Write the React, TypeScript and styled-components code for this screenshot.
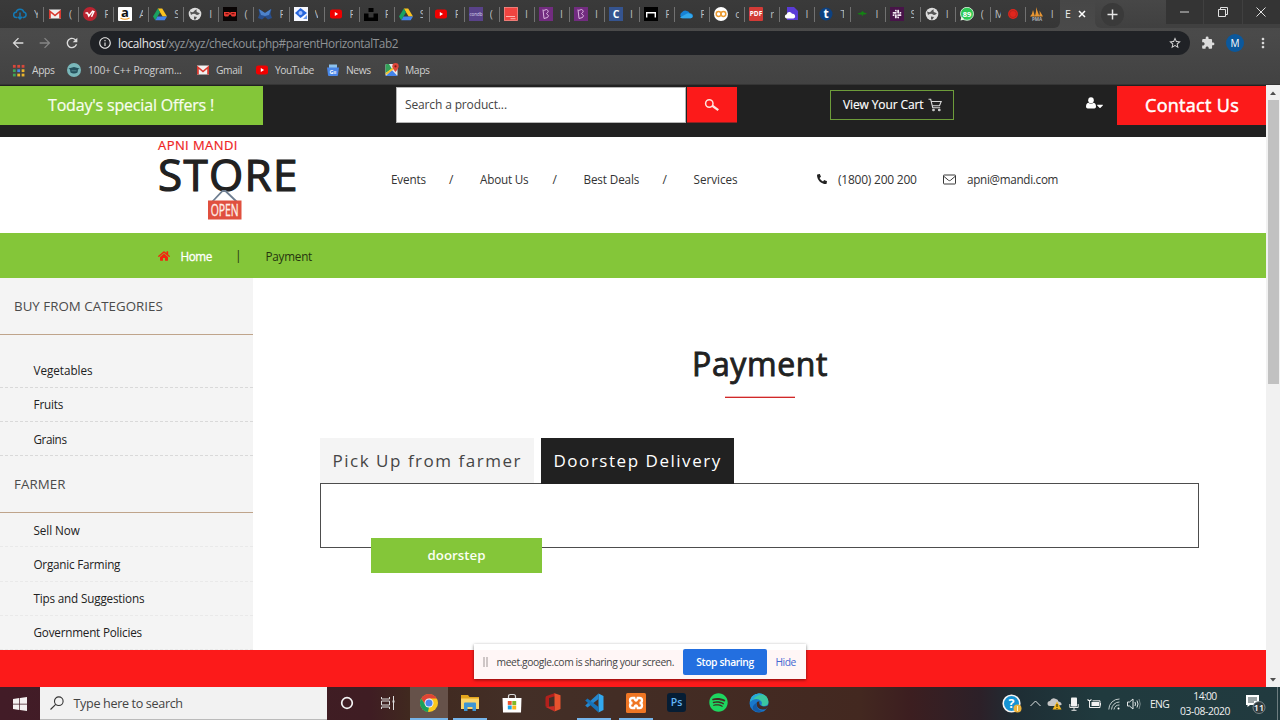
import React from 'react';
import styled, { createGlobalStyle } from 'styled-components';
import { FaHome, FaPhone, FaCaretDown, FaSlack, FaSpotify } from 'react-icons/fa';
import { MdArrowBack, MdArrowForward, MdRefresh, MdInfoOutline, MdStarBorder, MdExtension, MdMoreVert } from 'react-icons/md';

const GREEN = '#84c639';
const RED = '#fc1a1a';
const INK = '#212121';

const Global = createGlobalStyle`
  *, *::before, *::after { box-sizing: border-box; }
  body { margin: 0; overflow: hidden; background: #fff; font-family: "Open Sans", "Noto Sans", sans-serif; }
  svg { display: block; flex: none; }
`;

interface TypeProps { $size?: number; $ls?: number; $weight?: number; $stroke?: number }

const Text = styled.span<TypeProps>`
  flex: none;
  white-space: pre;
  font-size: ${p => p.$size ?? 12}px;
  letter-spacing: ${p => p.$ls ?? 0}px;
  font-weight: ${p => p.$weight ?? 400};
  -webkit-text-stroke: ${p => p.$stroke ?? 0}px currentColor;
`;

const Screen = styled.div`
  position: relative;
  display: flex;
  flex-direction: column;
  width: 1280px;
  height: 720px;
  overflow: hidden;
`;

/* ---------- browser chrome ---------- */

const Chrome = styled.header`
  height: 85px;
  flex: none;
  background: linear-gradient(#474747, #4a4a4a 40%, #424242);
  border-bottom: 1px solid #353535;
`;

const TabStrip = styled.div`
  display: flex;
  height: 28px;
`;

const Tabs = styled.div`
  display: flex;
  width: 1060px;
  padding-left: 8px;
  background: linear-gradient(#3a3a3a, #363636);
  border-radius: 0 0 6px 0;
`;

const Tab = styled.div`
  position: relative;
  display: flex;
  align-items: center;
  flex: none;
  width: 35.07px;
  padding-left: 5px;
  gap: 7px;
  &:not(:last-child)::after {
    content: '';
    position: absolute;
    right: -1px;
    top: 7px;
    width: 1px;
    height: 15px;
    background: #717171;
  }
`;

const TabLetter = styled.span<{ $wide?: boolean }>`
  width: ${p => (p.$wide ? 6 : 3.5)}px;
  overflow: hidden;
  font-size: 10.5px;
  line-height: 16px;
  color: #b9bcbf;
`;

const MeetTab = styled(Tab)`
  gap: 5px;
`;

const ActiveTab = styled.div`
  display: flex;
  align-items: center;
  gap: 7px;
  width: 35px;
  padding-left: 5px;
  color: #eee;
`;

const NewTabZone = styled.div`
  width: 71px;
  padding: 3px 0 0 6px;
  background: linear-gradient(#474747, #404040);
  border-radius: 0 0 0 6px;
`;

const NewTab = styled.div`
  display: grid;
  place-items: center;
  width: 23px;
  height: 23px;
  border-radius: 50%;
  background: #3a3a3a;
`;

const WindowButtons = styled.div`
  display: flex;
  gap: 1px;
  height: 28px;
  width: 114px;
  background: #404040;
  padding-bottom: 4px;
`;

const WindowButton = styled.div`
  flex: 1;
  display: grid;
  place-items: center;
  background: #343434;
`;

const Toolbar = styled.div`
  display: flex;
  align-items: center;
  height: 30px;
  padding-left: 10px;
  color: #dcdcdc;
`;

const NavButtons = styled.div`
  display: flex;
  gap: 11px;
  width: 80px;
`;

const Omnibox = styled.div`
  display: flex;
  align-items: center;
  width: 1100px;
  height: 24px;
  padding: 0 8px;
  border-radius: 12px;
  background: #202226;
  color: #8f9295;
`;

const Host = styled(Text)`
  margin-left: 6px;
  padding-bottom: 1px;
  color: #e8e8e8;
`;

const Path = styled(Text)`
  flex: 1;
  padding-bottom: 1px;
`;

const Extensions = styled.div`
  display: flex;
  align-items: center;
  margin-left: 11px;
  gap: 11px;
`;

const Avatar = styled.div`
  display: grid;
  place-items: center;
  width: 18px;
  height: 18px;
  border-radius: 50%;
  background: #0b589c;
  color: #fff;
`;

const Bookmarks = styled.div`
  display: flex;
  align-items: center;
  height: 24px;
  padding-left: 12px;
  color: #cfcfcf;
`;

const Bookmark = styled.div<{ $width: number; $gap?: number }>`
  display: flex;
  align-items: center;
  gap: ${p => p.$gap ?? 7}px;
  flex: none;
  width: ${p => p.$width}px;
`;

/* ---------- page ---------- */

const Viewport = styled.div`
  display: flex;
  height: 602px;
  flex: none;
`;

const Page = styled.div`
  display: flex;
  flex-direction: column;
  width: 1266px;
  background: #fff;
  color: ${INK};
`;

const TopBar = styled.div`
  display: flex;
  flex: none;
  height: 52px;
  padding-top: 1px;
  background: ${INK};
  color: #fff;
`;

const Offers = styled.div`
  display: flex;
  align-items: center;
  width: 263px;
  height: 39px;
  padding: 0 0 2px 48px;
  background: ${GREEN};
  color: #f8fdf0;
`;

const SearchForm = styled.div`
  display: flex;
  width: 341px;
  height: 36px;
  margin: 1px 0 0 133px;
`;

const SearchInput = styled.div`
  display: flex;
  align-items: center;
  width: 290px;
  padding: 0 8px 1px;
  background: #fff;
  border: 1px solid #b5b5b5;
  color: #444;
`;

const SearchButton = styled.div`
  display: grid;
  place-items: center;
  flex: 1;
  margin-left: 1px;
  background: ${RED};
  border-bottom: 1px solid #8f2222;
`;

const CartButton = styled.div`
  display: flex;
  align-items: center;
  gap: 5px;
  width: 124px;
  height: 30px;
  margin: 4px 0 0 93px;
  padding: 0 0 1px 12px;
  border: 1px solid #6d9c3a;
`;

const UserMenu = styled.div`
  display: flex;
  align-items: flex-end;
  height: 25px;
  width: 19px;
  margin: 0 12px 0 132px;
  padding-bottom: 2px;
`;

const MenuCaret = styled(FaCaretDown)`
  margin: 0 0 -2px -1px;
`;

const Contact = styled.div`
  display: flex;
  align-items: center;
  width: 149px;
  height: 39px;
  padding: 0 0 1px 28px;
  background: ${RED};
`;

const SiteHeader = styled.div`
  display: flex;
  flex: none;
  height: 96px;
  padding-left: 158px;
`;

const Logo = styled.div`
  width: 233px;
`;

const LogoSmall = styled(Text)`
  display: block;
  height: 17px;
  line-height: 17px;
  color: #ee2323;
`;

const LogoLarge = styled(Text)`
  display: block;
  height: 36px;
  line-height: 41px;
`;

const SignHolder = styled.div`
  margin-left: 49px;
`;

const Nav = styled.nav`
  display: flex;
  align-items: center;
  height: 84px;
  width: 426px;
  color: #333;
`;

const NavLink = styled.div<{ $width: number }>`
  display: flex;
  width: ${p => p.$width}px;
`;

const Slash = styled(Text)`
  width: 5px;
  margin: 0 26px 0 23px;
`;

const ContactLine = styled.div<{ $width: number }>`
  display: flex;
  align-items: center;
  gap: 11px;
  height: 84px;
  width: ${p => p.$width}px;
  color: #333;
`;

const PhoneIcon = styled(FaPhone)`
  color: #222;
  transform: scaleX(-1);
`;

const Breadcrumb = styled.div`
  display: flex;
  align-items: center;
  flex: none;
  height: 45px;
  padding-left: 158px;
  background: ${GREEN};
  color: #26350f;
`;

const HomeLink = styled.div`
  display: flex;
  align-items: center;
  gap: 10.500px;
  width: 77px;
  color: #fff;
`;

const Divider = styled(Text)`
  width: 30.5px;
  padding-bottom: 1px;
`;

const Body = styled.div`
  display: flex;
  flex: none;
  height: 372px;
`;

const Sidebar = styled.aside`
  width: 253px;
  background: #f4f4f4;
`;

const SideTitle = styled.div`
  display: flex;
  align-items: center;
  height: 57px;
  padding: 0 0 1px 14px;
  border-bottom: 1px solid #bfa48b;
  color: #4b4b4b;
`;

const SideList = styled.div<{ $top?: number; $line: string }>`
  padding-top: ${p => p.$top ?? 0}px;
  & > div { border-bottom: 1px dashed ${p => p.$line}; }
`;

const SideItem = styled.div`
  display: flex;
  align-items: center;
  height: 34.2px;
  padding-left: 33.5px;
`;

const Main = styled.main`
  width: 1013px;
  padding: 60px 67px 0;
`;

const Title = styled.div`
  display: flex;
  align-items: center;
  justify-content: center;
  height: 52px;
  padding: 0 0 2px 1px;
`;

const TitleRule = styled.div`
  width: 70px;
  height: 2px;
  margin: 6px auto 40px;
  background: linear-gradient(#f4b5b5 45%, #cf2929 46%);
`;

const TabList = styled.div`
  display: flex;
  gap: 7px;
`;

const TabButton = styled.div<{ $active?: boolean; $width: number }>`
  display: flex;
  align-items: center;
  position: relative;
  width: ${p => p.$width}px;
  height: ${p => (p.$active ? 46 : 45)}px;
  margin-bottom: ${p => (p.$active ? -1 : 0)}px;
  padding: 0 0 ${p => (p.$active ? 2 : 0)}px 12.5px;
  background: ${p => (p.$active ? INK : '#f4f4f4')};
  color: ${p => (p.$active ? '#fff' : '#454545')};
`;

const TabPanel = styled.div`
  height: 65px;
  padding: 54px 0 0 50px;
  border: 1px solid #4d4d4d;
`;

const DoorstepButton = styled.div`
  display: grid;
  place-items: center;
  width: 171px;
  height: 35px;
  padding-bottom: 1px;
  background: ${GREEN};
  color: #fbfff3;
`;

const FooterBand = styled.div`
  flex: 1;
  background: ${RED};
`;

const Scrollbar = styled.div`
  display: flex;
  flex-direction: column;
  align-items: center;
  width: 14px;
  padding-top: 1px;
  background: #f1f1f1;
`;

const ScrollArrow = styled.div`
  display: grid;
  place-items: center;
  height: 14px;
`;

const ScrollThumb = styled.div`
  width: 11px;
  height: 284px;
  margin-bottom: auto;
  background: #c1c1c1;
`;

/* ---------- sharing bar ---------- */

const ShareBar = styled.div`
  position: absolute;
  left: 474px;
  top: 644px;
  display: flex;
  align-items: center;
  width: 332px;
  height: 35px;
  padding-left: 9px;
  background: rgba(255, 255, 255, 0.96);
  box-shadow: 0 1px 3px rgba(0, 0, 0, 0.5);
  color: #454545;
`;

const Grip = styled.div`
  width: 5px;
  height: 10px;
  margin-right: 8.5px;
  border: solid #cfc6c6;
  border-width: 0 2px;
`;

const StopButton = styled.div`
  display: grid;
  place-items: center;
  width: 84px;
  height: 26px;
  margin: 0 8.5px 0 auto;
  border-radius: 2px;
  background: #236fe0;
  color: #fff;
`;

const HideLink = styled.div`
  display: flex;
  width: 30.5px;
  color: #4468d2;
`;

/* ---------- taskbar ---------- */

const Taskbar = styled.footer`
  display: flex;
  flex: none;
  height: 33px;
  background: linear-gradient(90deg, #421c27 0, #3f1d23 370px, #40291f 410px, #432f27 520px, #432820 860px, #3c1e20 910px, #2c2028 980px, #1e2e35 1020px, #203a3e 1100px, #213a3f 100%);
  color: #f0f0f0;
`;

const StartButton = styled.div`
  display: grid;
  place-items: center;
  width: 40px;
`;

const TaskSearch = styled.div`
  display: flex;
  align-items: center;
  gap: 9.5px;
  width: 287px;
  height: 33px;
  padding-left: 10px;
  background: #f2f2f2;
  border-bottom: 1px solid #bbb;
  color: #444;
`;

const Apps = styled.div`
  display: flex;
  margin-left: -1px;
`;

const TaskItem = styled.div<{ $focus?: boolean; $open?: boolean }>`
  display: grid;
  place-items: center;
  width: ${p => (p.$focus ? 38 : 34)}px;
  margin: 0 ${p => (p.$focus ? 1.65 : 3.65)}px;
  flex: none;
  background: ${p => (p.$focus ? '#66524a' : 'transparent')};
  border-bottom: 2px solid ${p => (p.$open ? '#76b5ea' : 'transparent')};
`;

const Tray = styled.div`
  display: flex;
  align-items: center;
  margin-left: auto;
  width: 279px;
`;

const TrayCell = styled.div<{ $width: number }>`
  display: flex;
  justify-content: center;
  flex: none;
  width: ${p => p.$width}px;
`;

const Clock = styled.div`
  display: flex;
  flex-direction: column;
  align-items: center;
  width: 60px;
  line-height: 15px;
`;

const ShowDesktop = styled.div`
  width: 1px;
  height: 33px;
  margin-left: 2px;
  background: #6d7d80;
`;

/* ---------- icon drawings ---------- */

const glyphText = (t: string, color: string, size: number, y = 10.5) => (
  <text x="7" y={y} fontSize={size} fontWeight="700" textAnchor="middle" fill={color} fontFamily="Open Sans, sans-serif">{t}</text>
);

const Ico = ({ children, s = 14 }: { children: React.ReactNode; s?: number }) => (
  <svg width={s} height={s} viewBox="0 0 14 14">{children}</svg>
);

const CloudDown = () => <Ico><path d="M4.2 10.5H3.4a2.6 2.6 0 0 1-.3-5.2A4 4 0 0 1 10.8 5a2.8 2.8 0 0 1 0 5.5H9.8M7 5.5v6.3M4.8 9.8 7 12l2.2-2.2" fill="none" stroke="#1479b4" strokeWidth="1.5" /></Ico>;
const Gmail = () => <Ico><path d="M1 2.5h12v9H1z" fill="#f1f1f1" /><path d="M1 11.5v-9l6 5 6-5v9h-1.8V6L7 9.4 2.8 6v5.5z" fill="#d93a30" /></Ico>;
const RedV = () => <Ico><circle cx="7" cy="7" r="7" fill="#bb2431" /><path d="M2.5 6h2l1.3 3L10 3.6M8.5 9.8 11.2 4" fill="none" stroke="#fff" strokeWidth="1.5" /></Ico>;
const Amazon = () => <Ico><rect width="14" height="14" rx="1" fill="#fff" />{glyphText('a', '#111', 13, 9.8)}<path d="M2.5 11q4.5 2.5 9 0" fill="none" stroke="#f39b1d" strokeWidth="1.2" /></Ico>;
const Drive = () => <Ico><path d="M4.8 1.5h4.4L14 9.6H9.6z" fill="#fbc31f" /><path d="M4.8 1.5 7 5.3 2.3 13.2 0 9.6z" fill="#19a261" /><path d="M4.500 9.600H14l-2.300 3.600H2.300z" fill="#4384ee" /></Ico>;
const Globe = () => <Ico><circle cx="7" cy="7" r="6.3" fill="#dcdcdc" /><path d="M2 4.500Q5 6 6 4.200T9 2.500Q7.500 4.500 10 5.500T12 6Q10 9 8 7.500T3 8zM6 9.500l3 .5-1.500 2.500H6z" fill="#555" /></Ico>;
const Glasses = () => <Ico><rect width="14" height="14" fill="#090404" /><path d="M1 5h5.600v1h.8V5H13v3.500l-1 1H8.800L7.500 7.500h-1L5.200 9.500H2l-1-1z" fill="#e93b32" /><path d="M2.500 6.300h3v1h-3zM8.500 6.300h3v1h-3z" fill="#500" /></Ico>;
const BlueM = () => <Ico><path d="M.5 2 7 6l6.500-4-1 5 1.500 4-4 1.500L7 10l-3 2.500L0 11l1.500-4z" fill="#294f8d" /><path d="m1 2 6 4 6-4-2 6-4 1-4-1z" fill="#4d82ca" /></Ico>;
const Diamond = () => <Ico><rect width="14" height="14" fill="#f6f8ff" /><path d="m6.500 1 6.500 5-6.500 5L1 6z" fill="#2766dc" /><circle cx="6.500" cy="6" r="2" fill="#9cbdff" /><path d="m9 12 4-4v4z" fill="#6a99ee" /></Ico>;
const YouTube = () => <Ico><rect x="1" y="2.500" width="12" height="9" rx="2.300" fill="#f00000" /><path d="M5.800 5v4l3.300-2z" fill="#fff" /></Ico>;
const Unsplash = () => <Ico><path d="M4.500 1h5v4h-5zM0 6.500h4.500v4h5v-4H14V14H0z" fill="#000" /></Ico>;
const Condb = () => <Ico><rect width="14" height="14" fill="#594289" /><text x="7" y="8.500" fontSize="4.500" textAnchor="middle" fill="#dcd5ec" fontFamily="Open Sans">condb</text></Ico>;
const RedBox = () => <Ico><rect x=".4" y=".4" width="13.200" height="13.200" fill="#f14440" stroke="#ff8c88" strokeWidth=".8" /><path d="M2 9.500h9M6.500 11.700h5" stroke="#ffc0bb" strokeWidth=".9" /></Ico>;
const Bee = () => <Ico><rect width="14" height="14" fill="#722c80" /><path d="M4 2.500 5 11.500 8.500 10.500Q11 9 7.500 6.500 11 4 7.500 2.500L4.500 3.500" fill="none" stroke="#e6c3ea" strokeWidth=".9" /></Ico>;
const SquareC = () => <Ico><rect width="14" height="14" fill="#35548f" />{glyphText('C', '#fff', 10.5)}</Ico>;
const Arch = () => <Ico><rect width="14" height="14" fill="#000" /><path d="M2.700 10.500V5.800h8.600v4.700" fill="none" stroke="#fff" strokeWidth="1.400" /></Ico>;
const OneDrive = () => <Ico><path d="M3.500 11.300a3.300 3.300 0 0 1-.5-6Q5 2.500 8 4q2 .3 2.800 2.300 3.200.2 3 2.700t-2.300 2.300z" fill="#1681d5" /><path d="M1 10.500 8 6.500q4-1 5.800 2.500-.3 2.300-2.300 2.300h-8Q2 11.500 1 10.500" fill="#32a7ec" /></Ico>;
const Colab = () => <Ico><circle cx="7" cy="7" r="7" fill="#fff" /><circle cx="4.600" cy="7" r="2.400" fill="none" stroke="#eb9b32" strokeWidth="1.500" /><circle cx="9.400" cy="7" r="2.400" fill="none" stroke="#eb9b32" strokeWidth="1.500" /></Ico>;
const Pdf = () => <Ico><rect width="14" height="14" rx="1" fill="#d23b37" />{glyphText('PDF', '#fff', 6.5, 9.4)}</Ico>;
const PurpleCloud = () => <Ico><path d="M3 0h7l4 4v9H3z" fill="#5a3bd6" /><path d="M2.500 11.500a2.200 2.200 0 0 1 .2-4.300 2.800 2.800 0 0 1 5.300-.4 2.300 2.300 0 0 1 1.300 4.700z" fill="#fff" /></Ico>;
const RoundT = () => <Ico><circle cx="7" cy="7" r="6.500" fill="#0d4180" />{glyphText('t', '#fff', 12, 11)}</Ico>;
const Plane = () => <Ico><path d="M2.500 6.500 6 5.500 7.500 4l1.500 1.500 3 1L10 7.500H8l-.5 2-1-2H4z" fill="#138313" /></Ico>;
const Slack = () => <Ico><rect width="14" height="14" fill="#481449" /><FaSlack x="2" y="2" size={10} color="#f3e8f3" /></Ico>;
const WhatsBadge = () => <Ico><circle cx="7" cy="6.800" r="6.500" fill="#2dc955" stroke="#e8fbe9" strokeWidth=".8" /><path d="m.5 13.500 1-4 3 3z" fill="#e8fbe9" />{glyphText('89', '#fff', 7.5, 9.6)}</Ico>;
const RecDot = () => <Ico><circle cx="7" cy="7" r="4.900" fill="#e0261d" /><circle cx="7" cy="7" r="3.500" fill="none" stroke="#91201b" strokeWidth=".5" /></Ico>;
const Sails = () => <Ico><path d="M0 9.500Q2.500 7 3 3l2 6.500zM4.500 9.500Q6.500 6 6 0l3.500 9.500zM9 9.500q1.200-2 .5-6l3.500 6z" fill="#e79532" /><text x="7" y="13.800" fontSize="4.500" fontWeight="700" textAnchor="middle" fill="#aeb2bb" fontFamily="Open Sans">PMA</text></Ico>;

const AppsGrid = () => (
  <Ico s={13}>{['#d9483b', '#d9483b', '#d9483b', '#3fa557', '#4a87e8', '#e8b52d', '#3fa557', '#e8b52d', '#e8b52d'].map((c, i) => (
    <rect key={i} x={1 + (i % 3) * 4.700} y={1 + Math.floor(i / 3) * 4.700} width="3" height="3" fill={c} />
  ))}</Ico>
);
const Owl = () => <Ico><circle cx="7" cy="7" r="7" fill="#79b7ba" /><path d="m1.500 5.500 5.500-1.500 5.500 1.500-1.500 1-.5 3q-3.500 2-7 0l-.5-3z" fill="#24505c" /><path d="M4.500 7.800h5" stroke="#5f9599" strokeWidth=".8" /></Ico>;
const News = () => <Ico><path d="M3 1.500h8V7H3z" fill="#8cc2ee" /><path d="M1 4.500h12l-1 7.500q0 1-1 1H3q-1 0-1-1z" fill="#4a86e8" />{glyphText('G≡', '#fff', 5.5, 10.8)}</Ico>;
const Maps = () => <Ico><rect x=".5" y="1" width="12" height="12" rx="1" fill="#e7eaec" /><path d="M.5 2v8L7 6 4 1H1.500z" fill="#34a25a" /><path d="m.8 13 6-6 5.700 6z" fill="#4383ea" /><path d="m1 11 9-7" stroke="#f6c42b" strokeWidth="1.800" /><path d="M10.500 9Q7.300 5 7.300 3.200a3.200 3.200 0 0 1 6.400 0Q13.700 5 10.500 9" fill="#e0473a" /><circle cx="10.500" cy="3.300" r="1.100" fill="#7d1c16" /></Ico>;

const tabs: [() => React.ReactElement, string][] = [
  [CloudDown, 'Y'], [Gmail, '('], [RedV, 'F'], [Amazon, 'A'], [Drive, 'S'], [Globe, 'I'], [Glasses, '('], [BlueM, 'F'],
  [Diamond, 'V'], [YouTube, 'F'], [Unsplash, 'F'], [Drive, 'S'], [YouTube, 'F'], [Condb, '('], [RedBox, 'I'], [Bee, 'I'],
  [Bee, 'I'], [SquareC, 'I'], [Arch, 'F'], [OneDrive, 'F'], [Colab, 'c'], [Pdf, 'r'], [PurpleCloud, 'I'], [RoundT, 'T'],
  [Plane, 'I'], [Slack, 'S'], [Globe, 'I'], [WhatsBadge, '('],
];

const OpenSign = () => (
  <svg width="36" height="31" viewBox="0 0 36 31">
    <path d="M5 12 15.500 1h3L30 12" fill="none" stroke="#6e7e91" strokeWidth="1.800" />
    <rect x="1" y="10.500" width="33.500" height="19" fill="#e0503f" />
    <text x="17.700" y="25.600" textAnchor="middle" textLength="28" lengthAdjust="spacingAndGlyphs" fontSize="17" fill="#fff0ea" stroke="#fff0ea" strokeWidth=".3" fontFamily="Open Sans, sans-serif">OPEN</text>
  </svg>
);

const CartIcon = () => (
  <svg width="14" height="14" viewBox="0 0 14 14" fill="none" stroke="#d8d8d8" strokeWidth="1.100">
    <path d="M.5 1.300h2.200l2 8.400h7.500M3.500 3.500h9.700l-1.700 4.200H4.400" />
    <circle cx="5.500" cy="12" r=".8" /><circle cx="11.300" cy="12" r=".8" />
  </svg>
);

const MagnifierIcon = () => (
  <svg width="16" height="14" viewBox="0 0 16 14" fill="none" stroke="#ffe3dd">
    <circle cx="5.300" cy="5.500" r="3.700" strokeWidth="1.500" /><path d="m8.300 7.800 6 4.300" strokeWidth="2.300" />
  </svg>
);

const UserIcon = () => (
  <svg width="10" height="12" viewBox="0 0 10 12" fill="#fff">
    <ellipse cx="5" cy="3.300" rx="2.800" ry="3.100" /><path d="M2.300 5.800Q0 6.300 0 9.800 0 11.500 1.700 11.500h6.600Q10 11.500 10 9.800 10 6.300 7.700 5.800 5 8 2.300 5.800" />
  </svg>
);

const EnvelopeIcon = () => (
  <svg width="13" height="11" viewBox="0 0 13 11" fill="none" stroke="#3a3a3a">
    <rect x=".5" y="1" width="12" height="9" rx=".6" /><path d="M.8 2.300 5.500 6.300q1 .7 2 0L12.200 2.300" />
  </svg>
);

const Windows = () => <svg width="14" height="14" viewBox="0 0 14 14" fill="#f4f0f0"><path d="m0 2 6.300-.9v5.600H0zM7 1l7-1v6.700H7zM0 7.400h6.300V13L0 12.100zM7 7.400h7V14l-7-1z" /></svg>;
const TaskMagnifier = () => <svg width="14" height="14" viewBox="0 0 14 14" fill="none" stroke="#333" strokeWidth="1.100"><circle cx="8.800" cy="5.200" r="4.300" /><path d="M5.700 8.300.5 13.500" /></svg>;
const Cortana = () => <svg width="14" height="14" viewBox="0 0 14 14"><circle cx="7" cy="7" r="5.300" fill="none" stroke="#f5f5f5" strokeWidth="1.700" /></svg>;
const TaskView = () => <svg width="14" height="14" viewBox="0 0 14 14" fill="none" stroke="#ddd" strokeWidth="1"><path d="M.5 1v2h8V1M.5 13v-2h8v2M.5 5h8v4h-8zM12.500 0v14" /><path d="M11.500 5.500h2" strokeWidth="2" /></svg>;
const ChromeIcon = () => (
  <svg width="20" height="20" viewBox="0 0 20 20">
    <circle cx="10" cy="10" r="9" fill="#fbc81e" />
    <path d="M2.200 5.500A9 9 0 0 1 17.800 5.500H10L6.500 12z" fill="#df4436" />
    <path d="M2.200 5.500 6.500 12 10 14 9 19A9 9 0 0 1 2.200 5.500" fill="#1ba05c" />
    <circle cx="10" cy="10" r="4.500" fill="#f5f5f5" /><circle cx="10" cy="10" r="3.500" fill="#4a86ec" />
  </svg>
);
const Folder = () => <svg width="20" height="18" viewBox="0 0 20 18"><path d="M1 1h7l1.500 2H19v12H1z" fill="#e5a61c" /><path d="M1 4.500h18V15H1z" fill="#fbd568" /><path d="M4 17V9.500q0-1 1-1h10q1 0 1 1V17h-3.500v-4h-5v4z" fill="#3e96d2" /></svg>;
const Store = () => <svg width="20" height="20" viewBox="0 0 20 20"><path d="M6.500 6V3.500q0-2 2-2h3q2 0 2 2V6" fill="none" stroke="#d9d9d9" strokeWidth="1.200" /><path d="M.5 5h19l-.5 14.500H1z" fill="#fff" /><path d="M5.800 8h3.900v3.900H5.800z" fill="#ed5530" /><path d="M10.300 8h3.900v3.900h-3.900z" fill="#80b827" /><path d="M5.800 12.500h3.900v3.900H5.800z" fill="#1ba2e6" /><path d="M10.300 12.500h3.900v3.900h-3.900z" fill="#f9b71c" /></svg>;
const Office = () => <svg width="16" height="19" viewBox="0 0 16 19"><path d="M10 0 1.500 3Q.5 3.500.5 5v8.500l3.500 1V5l6-1.700z" fill="#b3201c" /><path d="m9.500.2 6 2V16l-6 2.500z" fill="#e8532e" /><path d="m.7 14 9-1v5.500z" fill="#c72c25" /></svg>;
const VsCode = () => <svg width="20" height="20" viewBox="0 0 20 20"><path d="M14.500.5 19.500 3v14l-5 2.500z" fill="#32a8ee" /><path d="M14.500.5V6L3.500 14.500l-2.300-2z" fill="#2587cf" /><path d="M14.500 19.500V14L3.500 5.500l-2.300 2z" fill="#1673b9" /></svg>;
const Xampp = () => <svg width="20" height="20" viewBox="0 0 20 20"><rect width="20" height="20" rx="1.500" fill="#ef7624" /><path d="M6.500 5h1.800Q9 7.500 10 7.500T11.700 5h1.800a2.500 2.500 0 0 1 0 5 2.500 2.500 0 0 1 0 5h-1.800Q11 12.500 10 12.500T8.300 15H6.500a2.500 2.500 0 0 1 0-5 2.500 2.500 0 0 1 0-5z" fill="none" stroke="#fff" strokeWidth="2.300" /></svg>;
const Photoshop = () => <svg width="19" height="19" viewBox="0 0 19 19"><rect width="19" height="19" rx="3" fill="#061d34" /><text x="9.500" y="13" fontSize="10.500" fontWeight="600" textAnchor="middle" fill="#62b4f4" fontFamily="Open Sans, sans-serif">Ps</text></svg>;
const Edge = () => (
  <svg width="20" height="20" viewBox="0 0 20 20">
    <circle cx="10" cy="10" r="9.500" fill="#1978cb" />
    <path d="M.8 9Q2 1 10 .5q8.500.3 9.500 8 0 4-4 4.500-3.500.2-3-1.700 1-1.500-.5-3.300Q9 5 4.500 6.500 1.500 7.800.8 9" fill="#3bc6a0" />
    <path d="M.8 9Q2 1 10 .5q3 0 5 1.500Q8 1 4.500 6.500 1.500 7.800.8 9" fill="#28a7dc" />
    <path d="M7.500 10q0 6 6 6.500 3 .3 5-1.800 1-1 .8-2.500-4 2.300-7.300.5-2.500-1.700-1.500-4.500-2.500 0-3 1.800" fill="#432b26" />
    <path d="M7.500 10Q7 17 14 18 8.500 20.500 4.500 17 2 13 7.500 10" fill="#145aa5" />
  </svg>
);

const HelpBadge = () => <svg width="20" height="20" viewBox="0 0 20 20"><circle cx="9.500" cy="9.500" r="8.300" fill="#1593d4" stroke="#f4f4f4" strokeWidth="1.600" /><text x="9.500" y="14" fontSize="12.500" fontWeight="700" textAnchor="middle" fill="#fff" fontFamily="Open Sans, sans-serif">?</text><circle cx="15.500" cy="14.500" r="4" fill="#eeb33c" /><path d="M15.500 12v5" stroke="#fff3c5" strokeWidth="1" /></svg>;
const CloudWarn = () => <svg width="16" height="14" viewBox="0 0 16 14"><path d="M3 9a2.500 2.500 0 0 1 0-5Q5 0 9 2q2 .3 2.500 2.500Q15 5 14.500 8L9 9z" fill="#c6c6c6" /><path d="m10 4.500 4.500 8h-9z" fill="#f1b51e" /><path d="M10 7v3M10 11v1" stroke="#352a00" strokeWidth="1.100" /></svg>;
const Mic = () => <svg width="10" height="14" viewBox="0 0 10 14"><rect x="2" y=".5" width="6" height="9" rx=".8" fill="#f2f2f2" /><path d="M.8 7v3.500h8.400V7M5 10.500v2.800M2.500 13.300h5" fill="none" stroke="#e2e2e2" strokeWidth="1" /></svg>;
const Battery = () => <svg width="14" height="9" viewBox="0 0 14 9"><path d="M4.500 3h7.500v4H4.500z" fill="#f2f2f2" /><path d="M1 0v1.500h3V0M2.500 2v6.500H13V1.800H5.500M13.500 4v2.500" fill="none" stroke="#ececec" /></svg>;
const Wifi = () => <svg width="12" height="12" viewBox="0 0 12 12" fill="none" stroke="#c2cccc"><path d="M.8 11.500A10.500 10.500 0 0 1 11.500 1M3.500 11.500a8 8 0 0 1 8-7.500M6 11.500A5.500 5.500 0 0 1 11.500 7" /><circle cx="10.500" cy="10.500" r="1" fill="#fff" stroke="none" /></svg>;
const Volume = () => <svg width="14" height="12" viewBox="0 0 14 12" fill="none" stroke="#e3e8e8"><path d="M.5 4h2L6 1v10L2.500 8h-2z" /><path d="M8 4q1 2 0 4M10 2.500q2 3.500 0 7" /><path d="M12 1q2.500 5 0 10" stroke="#77898b" /></svg>;
const Notifications = () => <svg width="21" height="20" viewBox="0 0 21 20"><path d="M1 1h13v10H5l-2.500 2v-2H1z" fill="#fff" /><path d="M3 4h9M3 6h9M3 8h6" stroke="#39494c" /><circle cx="14" cy="13.500" r="6" fill="#303a3d" stroke="#8d989a" strokeWidth=".8" /><text x="14" y="17" fontSize="9" fontWeight="600" textAnchor="middle" fill="#fff" fontFamily="Open Sans, sans-serif">11</text></svg>;

const navLinks = [
  { label: 'Events', width: 35, ls: -0.15 }, { label: 'About Us', width: 49.5, ls: -0.2 },
  { label: 'Best Deals', width: 56, ls: -0.12 }, { label: 'Services', width: 45, ls: -0.03 },
];

const categories = [['Vegetables', -0.02], ['Fruits', -0.15], ['Grains', -0.4]] as const;
const farmer = [['Sell Now', -0.07], ['Organic Farming', -0.22], ['Tips and Suggestions', -0.17], ['Government Policies', -0.2]] as const;

const apps: { icon: React.ReactElement; open?: boolean; focus?: boolean }[] = [
  { icon: <Cortana /> }, { icon: <TaskView /> }, { icon: <ChromeIcon />, open: true, focus: true }, { icon: <Folder />, open: true },
  { icon: <Store /> }, { icon: <Office /> }, { icon: <VsCode />, open: true }, { icon: <Xampp />, open: true },
  { icon: <Photoshop /> }, { icon: <FaSpotify size={19} color="#1ed760" /> }, { icon: <Edge /> },
];

export default function App() {
  return (
    <Screen>
      <Global />
      <Chrome>
        <TabStrip>
          <Tabs>
            {tabs.map(([Icon, letter], i) => (
              <Tab key={i}><Icon /><TabLetter>{letter}</TabLetter></Tab>
            ))}
            <MeetTab><TabLetter $wide>M</TabLetter><RecDot /></MeetTab>
            <Tab><Sails /><TabLetter>I</TabLetter></Tab>
          </Tabs>
          <ActiveTab>
            <Text $size={10.5}>E</Text>
            <svg width="8" height="8" viewBox="0 0 8 8"><path d="m1 1 6 6M7 1 1 7" stroke="#fff" strokeWidth="1.500" /></svg>
          </ActiveTab>
          <NewTabZone><NewTab><svg width="11" height="11" viewBox="0 0 11 11"><path d="M5.500.5v10M.5 5.500h10" stroke="#e6e6e6" strokeWidth="1.500" /></svg></NewTab></NewTabZone>
          <WindowButtons>
            <WindowButton><svg width="9" height="9"><path d="M0 4h9" stroke="#d5d5d5" /></svg></WindowButton>
            <WindowButton><svg width="10" height="10" fill="none" stroke="#e0e0e0"><path d="M.5 2.500h7v7h-7zM2.500 2.500v-2h7v7h-2" /></svg></WindowButton>
            <WindowButton><svg width="10" height="10"><path d="m.5.500 9 9M9.500.5l-9 9" stroke="#e0e0e0" /></svg></WindowButton>
          </WindowButtons>
        </TabStrip>
        <Toolbar>
          <NavButtons><MdArrowBack size={16} /><MdArrowForward size={16} color="#858585" /><MdRefresh size={16} /></NavButtons>
          <Omnibox>
            <MdInfoOutline size={14} color="#e5e5e5" />
            <Host $size={11.8} $ls={-0.3}>localhost</Host>
            <Path $size={11.8} $ls={-0.43}>/xyz/xyz/checkout.php#parentHorizontalTab2</Path>
            <MdStarBorder size={14} color="#d8d8d8" />
          </Omnibox>
          <Extensions>
            <MdExtension size={14} />
            <Avatar><Text $size={10}>M</Text></Avatar>
            <MdMoreVert size={16} />
          </Extensions>
        </Toolbar>
        <Bookmarks>
          <Bookmark $width={55}><AppsGrid /><Text $size={10.3} $ls={-0.35}>Apps</Text></Bookmark>
          <Bookmark $width={129}><Owl /><Text $size={10.3} $ls={-0.18}>100+ C++ Program...</Text></Bookmark>
          <Bookmark $width={59} $gap={6}><Gmail /><Text $size={10.3} $ls={-0.4}>Gmail</Text></Bookmark>
          <Bookmark $width={71} $gap={6}><YouTube /><Text $size={10.3} $ls={-0.5}>YouTube</Text></Bookmark>
          <Bookmark $width={59} $gap={6}><News /><Text $size={10.3} $ls={-0.4}>News</Text></Bookmark>
          <Bookmark $width={60} $gap={6}><Maps /><Text $size={10.3} $ls={-0.4}>Maps</Text></Bookmark>
        </Bookmarks>
      </Chrome>

      <Viewport>
        <Page>
          <TopBar>
            <Offers><Text $size={16} $ls={-0.18} $stroke={0.2}>Today's special Offers !</Text></Offers>
            <SearchForm>
              <SearchInput><Text $size={12} $ls={-0.14}>Search a product...</Text></SearchInput>
              <SearchButton><MagnifierIcon /></SearchButton>
            </SearchForm>
            <CartButton><Text $size={12} $ls={-0.12} $stroke={0.15}>View Your Cart</Text><CartIcon /></CartButton>
            <UserMenu><UserIcon /><MenuCaret size={10} /></UserMenu>
            <Contact><Text $size={18} $ls={0.3} $stroke={0.5}>Contact Us</Text></Contact>
          </TopBar>

          <SiteHeader>
            <Logo>
              <LogoSmall $size={13} $ls={0.42} $stroke={0.2}>APNI MANDI</LogoSmall>
              <LogoLarge $size={44} $ls={1.3} $stroke={1.2}>STORE</LogoLarge>
              <SignHolder><OpenSign /></SignHolder>
            </Logo>
            <Nav>
              {navLinks.map((l, i) => (
                <React.Fragment key={l.label}>
                  {i > 0 && <Slash>/</Slash>}
                  <NavLink $width={l.width}><Text $size={11.7} $ls={l.ls}>{l.label}</Text></NavLink>
                </React.Fragment>
              ))}
            </Nav>
            <ContactLine $width={126}><PhoneIcon size={10} /><Text $size={12} $ls={-0.23}>(1800) 200 200</Text></ContactLine>
            <ContactLine $width={130}><EnvelopeIcon /><Text $size={11.7} $ls={-0.3}>apni@mandi.com</Text></ContactLine>
          </SiteHeader>

          <Breadcrumb>
            <HomeLink><FaHome size={12} color="#f3230f" /><Text $size={11.7} $ls={-0.4} $stroke={0.3}>Home</Text></HomeLink>
            <Divider>|</Divider>
            <Text $size={11.7} $ls={-0.22}>Payment</Text>
          </Breadcrumb>

          <Body>
            <Sidebar>
              <SideTitle><Text $size={13.3} $ls={0.04}>BUY FROM CATEGORIES</Text></SideTitle>
              <SideList $top={18.6} $line="#d9d9d9">
                {categories.map(([label, ls]) => <SideItem key={label}><Text $size={11.7} $ls={ls}>{label}</Text></SideItem>)}
              </SideList>
              <SideTitle><Text $size={13.3} $ls={0.1}>FARMER</Text></SideTitle>
              <SideList $line="#e9e9e9">
                {farmer.map(([label, ls]) => <SideItem key={label}><Text $size={11.7} $ls={ls}>{label}</Text></SideItem>)}
              </SideList>
            </Sidebar>
            <Main>
              <Title><Text $size={32} $ls={0.6} $stroke={0.9}>Payment</Text></Title>
              <TitleRule />
              <TabList>
                <TabButton $width={214}><Text $size={17} $ls={1.52}>Pick Up from farmer</Text></TabButton>
                <TabButton $active $width={193}><Text $size={17} $ls={1.53}>Doorstep Delivery</Text></TabButton>
              </TabList>
              <TabPanel>
                <DoorstepButton><Text $size={13.3} $ls={0.02} $weight={600}>doorstep</Text></DoorstepButton>
              </TabPanel>
            </Main>
          </Body>
          <FooterBand />
        </Page>
        <Scrollbar>
          <ScrollArrow><svg width="6" height="4"><path d="M0 4 3 .5 6 4z" fill="#505050" /></svg></ScrollArrow>
          <ScrollThumb />
          <ScrollArrow><svg width="6" height="4"><path d="M0 0 3 3.500 6 0z" fill="#505050" /></svg></ScrollArrow>
        </Scrollbar>
      </Viewport>

      <Taskbar>
        <StartButton><Windows /></StartButton>
        <TaskSearch><TaskMagnifier /><Text $size={12.6} $ls={-0.35}>Type here to search</Text></TaskSearch>
        <Apps>
          {apps.map((a, i) => <TaskItem key={i} $open={a.open} $focus={a.focus}>{a.icon}</TaskItem>)}
        </Apps>
        <Tray>
          <TrayCell $width={22}><HelpBadge /></TrayCell>
          <TrayCell $width={24}><svg width="11" height="7"><path d="M.5 6 5.500 1l5 5" fill="none" stroke="#e0e4e4" /></svg></TrayCell>
          <TrayCell $width={16}><CloudWarn /></TrayCell>
          <TrayCell $width={21}><Mic /></TrayCell>
          <TrayCell $width={20}><Battery /></TrayCell>
          <TrayCell $width={20}><Wifi /></TrayCell>
          <TrayCell $width={20}><Volume /></TrayCell>
          <TrayCell $width={31}><Text $size={10.3} $ls={-0.65}>ENG</Text></TrayCell>
          <Clock><Text $size={10.3} $ls={-0.6}>14:00</Text><Text $size={10.3} $ls={-0.35}>03-08-2020</Text></Clock>
          <TrayCell $width={40}><Notifications /></TrayCell>
          <ShowDesktop />
        </Tray>
      </Taskbar>

      <ShareBar>
        <Grip />
        <Text $size={10.3} $ls={-0.4}>meet.google.com is sharing your screen.</Text>
        <StopButton><Text $size={10.3} $ls={-0.4} $weight={600}>Stop sharing</Text></StopButton>
        <HideLink><Text $size={10.3} $ls={-0.5}>Hide</Text></HideLink>
      </ShareBar>
    </Screen>
  );
}
